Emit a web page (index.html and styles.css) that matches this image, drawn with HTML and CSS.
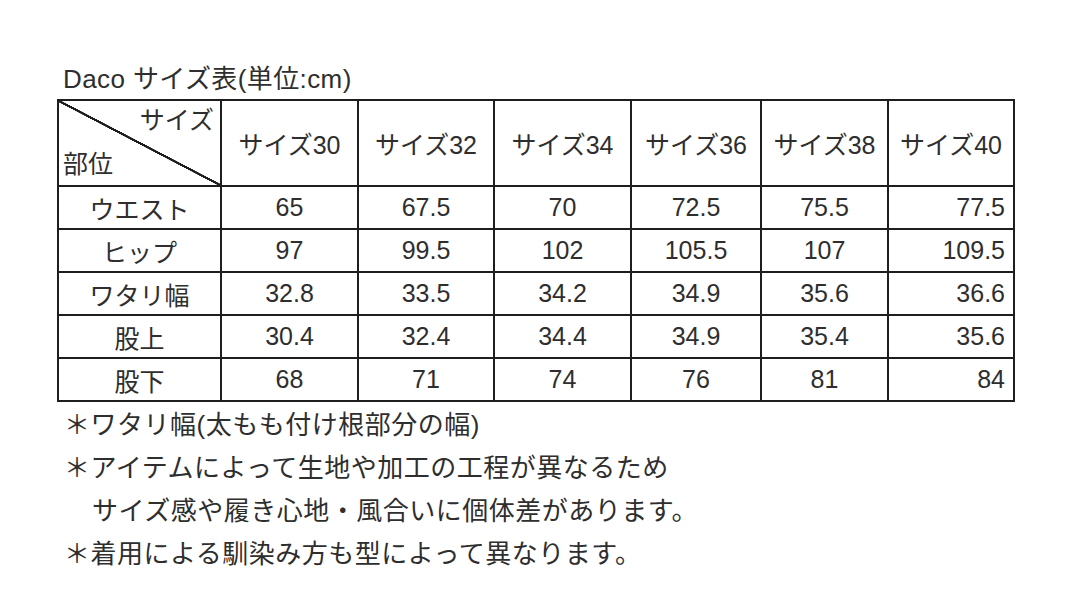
FILE: index.html
```html
<!DOCTYPE html>
<html lang="ja">
<head>
<meta charset="utf-8">
<title>Daco サイズ表</title>
<link rel="stylesheet" href="styles.css">
</head>
<body>
<div class="page">
  <div class="title">Daco サイズ表(単位:cm)</div>
  <table class="sizes">
    <colgroup>
      <col class="c0"><col class="c1"><col class="c2"><col class="c3"><col class="c4"><col class="c5"><col class="c6">
    </colgroup>
    <thead>
      <tr>
        <th class="corner">
          <div class="corner-inner">
            <span class="corner-top">サイズ</span>
            <span class="corner-bottom">部位</span>
          </div>
        </th>
        <th>サイズ30</th>
        <th>サイズ32</th>
        <th>サイズ34</th>
        <th>サイズ36</th>
        <th>サイズ38</th>
        <th>サイズ40</th>
      </tr>
    </thead>
    <tbody>
      <tr><td class="part">ウエスト</td><td>65</td><td>67.5</td><td>70</td><td>72.5</td><td>75.5</td><td class="last">77.5</td></tr>
      <tr><td class="part">ヒップ</td><td>97</td><td>99.5</td><td>102</td><td>105.5</td><td>107</td><td class="last">109.5</td></tr>
      <tr><td class="part">ワタリ幅</td><td>32.8</td><td>33.5</td><td>34.2</td><td>34.9</td><td>35.6</td><td class="last">36.6</td></tr>
      <tr><td class="part">股上</td><td>30.4</td><td>32.4</td><td>34.4</td><td>34.9</td><td>35.4</td><td class="last">35.6</td></tr>
      <tr><td class="part">股下</td><td>68</td><td>71</td><td>74</td><td>76</td><td>81</td><td class="last">84</td></tr>
    </tbody>
  </table>
  <div class="notes">
    <p>＊ワタリ幅(太もも付け根部分の幅)</p>
    <p>＊アイテムによって生地や加工の工程が異なるため</p>
    <p class="indent">サイズ感や履き心地・風合いに個体差があります。</p>
    <p>＊着用による馴染み方も型によって異なります。</p>
  </div>
</div>
</body>
</html>
```

FILE: styles.css
```css
html, body {
  margin: 0;
  padding: 0;
  background: #ffffff;
}

body {
  font-family: "Liberation Sans", "Noto Sans CJK JP", sans-serif;
  color: #2e2e2e;
}

.page {
  padding: 64px 0 0 57px;
}

.title {
  font-size: 26px;
  line-height: 30px;
  padding-left: 6px;
  margin-bottom: 5px;
  letter-spacing: 0.4px;
}

.sizes {
  border-collapse: collapse;
  table-layout: fixed;
  width: 956px;
  font-size: 25px;
}

.c0 { width: 163px; }
.c1 { width: 137px; }
.c2 { width: 136px; }
.c3 { width: 137px; }
.c4 { width: 130px; }
.c5 { width: 127px; }
.c6 { width: 126px; }

.sizes th,
.sizes td {
  border: 2px solid #1e1e1e;
  padding: 0;
  font-weight: normal;
  text-align: center;
  white-space: nowrap;
}

.sizes thead tr {
  height: 86px;
}

.sizes tbody tr {
  height: 43px;
}

.sizes td.last {
  text-align: right;
  padding-right: 8px;
}

.sizes th.corner {
  background: linear-gradient(to top right, transparent calc(50% - 1.3px), #1e1e1e calc(50% - 1px), #1e1e1e calc(50% + 1px), transparent calc(50% + 1.3px));
}

.corner-inner {
  display: flex;
  flex-direction: column;
  justify-content: space-between;
  height: 84px;
  padding: 4px 6px 6px 4px;
  box-sizing: border-box;
  line-height: 30px;
}

.corner-top {
  align-self: flex-end;
}

.corner-bottom {
  align-self: flex-start;
}

.notes {
  font-size: 26px;
  padding-left: 7px;
  margin-top: 2px;
  letter-spacing: 0.5px;
}

.notes p {
  margin: 0;
  line-height: 43px;
}

.notes p.indent {
  padding-left: 28px;
}
```
